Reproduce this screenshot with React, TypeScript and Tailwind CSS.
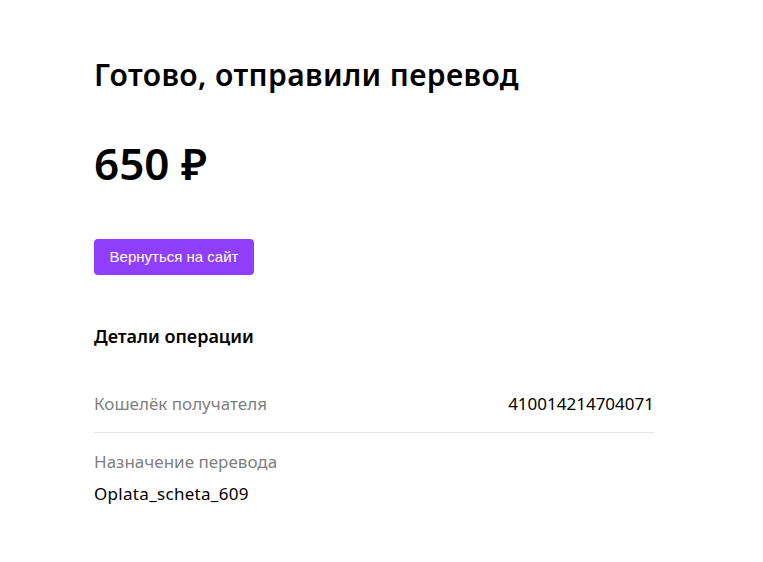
export default function App() {
  return (
    <div className="min-h-[562px] w-full bg-white" style={{ fontFamily: '"Noto Sans", Inter, sans-serif' }}>
      <div className="ml-[94px] w-[560px] pt-[53px]">
        <h1 className="text-[30px] leading-[44px] font-semibold text-black tracking-[0.4px]">Готово, отправили перевод</h1>
        <div className="mt-[38px] text-[44px] leading-[56px] font-semibold text-black">650 ₽</div>
        <button className="mt-[48px] h-[36px] w-[160px] rounded-[4px] bg-[#8f3ffc] text-[15px] text-white" style={{ fontFamily: '"Liberation Sans", Arial, sans-serif' }}>
          Вернуться на сайт
        </button>
        <div className="mt-[48px] text-[18px] leading-[26px] font-semibold text-black">Детали операции</div>
        <div className="mt-[43px] flex items-center justify-between pb-[16px] border-b border-[#e6e6e6]">
          <span className="text-[17px] leading-[24px] text-[#7f7f7f]">Кошелёк получателя</span>
          <span className="text-[17px] leading-[24px] text-black">410014214704071</span>
        </div>
        <div className="mt-[17px] text-[17px] leading-[24px] text-[#7f7f7f]">Назначение перевода</div>
        <div className="mt-[8px] text-[17px] leading-[24px] text-black tracking-[0.3px]">Oplata_scheta_609</div>
      </div>
    </div>
  );
}
